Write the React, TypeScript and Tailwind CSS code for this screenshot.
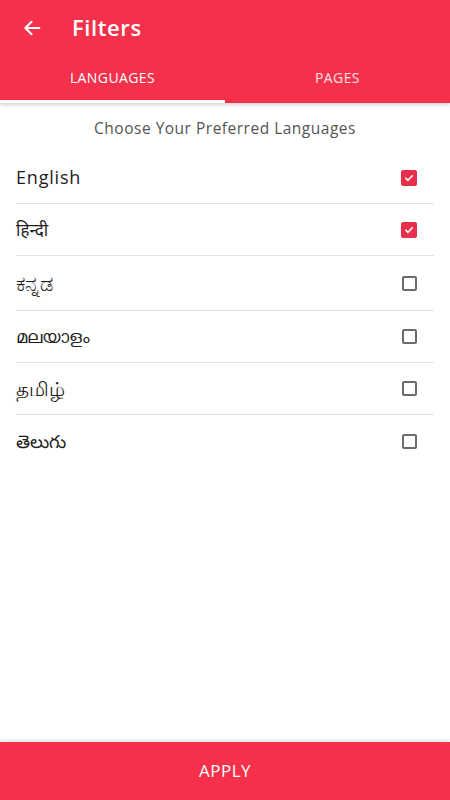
import { useState } from "react";

const LANGS = [
  { label: "English", checked: true, size: "text-[18px] tracking-[0.8px]", h: "h-[52px]" },
  { label: "हिन्दी", checked: true, size: "text-[17px]", h: "h-[52px]" },
  { label: "ಕನ್ನಡ", checked: false, size: "text-[21px]", h: "h-[55px]" },
  { label: "മലയാളം", checked: false, size: "text-[18px]", h: "h-[52px]" },
  { label: "தமிழ்", checked: false, size: "text-[19.5px]", h: "h-[52px]" },
  { label: "తెలుగు", checked: false, size: "text-[18px]", h: "h-[52px]" },
];

function Check({ on }: { on: boolean }) {
  if (on) {
    return (
      <span className="flex h-[16px] w-[16px] items-center justify-center rounded-[2px] bg-[#e8304a]">
        <svg width="10" height="10" viewBox="0 0 10 10" fill="none">
          <path d="M1.8 5.2 L4 7.3 L8.3 2.8" stroke="white" strokeWidth="1.6" strokeLinecap="round" strokeLinejoin="round" />
        </svg>
      </span>
    );
  }
  return <span className="block h-[15px] w-[15px] rounded-[2px] border-2 border-[#6b6b6b]" />;
}

export default function App() {
  const [checked, setChecked] = useState(LANGS.map((l) => l.checked));
  const [tab, setTab] = useState(0);

  return (
    <div className="flex h-screen w-full flex-col bg-white font-['Open_Sans','Noto_Sans',sans-serif]">
      <header className="relative z-10 bg-[#f5304a] shadow-[0_2px_4px_rgba(0,0,0,0.18)]">
        <div className="flex h-[55px] items-center">
          <button type="button" className="ml-[20px] flex h-[24px] w-[24px] items-center justify-center text-white">
            <svg width="22" height="22" viewBox="0 0 24 24" fill="none">
              <path d="M20 12H5 M11.5 5.2 L4.7 12 L11.5 18.8" stroke="white" strokeWidth="2.3" strokeLinecap="round" strokeLinejoin="round" />
            </svg>
          </button>
          <h1 className="ml-[28px] text-[22px] font-semibold tracking-[0.6px] text-white">Filters</h1>
        </div>
        <div className="flex h-[48px]">
          {["LANGUAGES", "PAGES"].map((t, i) => (
            <button
              key={t}
              type="button"
              onClick={() => setTab(i)}
              className={
                "flex flex-1 items-center justify-center border-b-[3px] text-[14px] tracking-[0.4px] " +
                (tab === i ? "border-white text-white" : "border-transparent text-white/85")
              }
            >
              {t}
            </button>
          ))}
        </div>
      </header>

      <main className="flex-1">
        <p className="pt-[14px] text-center text-[15.5px] tracking-[0.5px] text-[#555]">Choose Your Preferred Languages</p>
        <ul className="mx-[16px] mt-[12px]">
          {LANGS.map((l, i) => (
            <li
              key={l.label}
              onClick={() => setChecked((c) => c.map((v, j) => (j === i ? !v : v)))}
              className={
                "flex items-center justify-between pr-[17px] " +
                l.h +
                (i < LANGS.length - 1 ? " border-b border-[#e3e3e3]" : "")
              }
            >
              <span className={"text-[#1d1d1d] " + l.size}>{l.label}</span>
              <Check on={checked[i]} />
            </li>
          ))}
        </ul>
      </main>

      <button type="button" className="h-[58px] w-full bg-[#f5304a] text-[17px] tracking-[0.5px] text-white shadow-[0_-1px_3px_rgba(0,0,0,0.15)]">
        APPLY
      </button>
    </div>
  );
}
